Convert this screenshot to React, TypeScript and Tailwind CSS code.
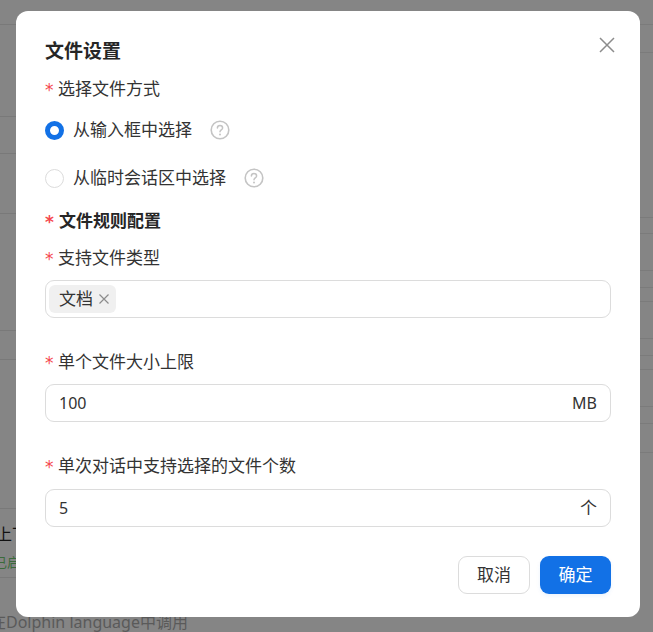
import React from "react";

const fontStack = { fontFamily: '"Noto Sans", "Noto Sans CJK SC", sans-serif' };

const leftRows = [25, 92, 37, 60, 117, 29, 149, 69];
const rightRows = [25, 28, 165, 16, 37, 17, 14, 37, 17, 14, 37, 17, 29];

const Star = ({ bold }: { bold?: boolean }) => (
  <span className={`text-[#f5484e] font-['DejaVu_Sans'] ${bold ? "font-bold" : "font-normal"} w-[13px] shrink-0 text-[17px] leading-none translate-y-[1px]`}>*</span>
);

const Label = ({ text }: { text: string }) => (
  <div className="flex items-center h-[24px] text-[17px] text-[#333333]">
    <Star />
    <span>{text}</span>
  </div>
);

const Help = () => (
  <svg width="20" height="20" viewBox="0 0 20 20" fill="none">
    <circle cx="10" cy="10" r="8.8" stroke="#c4c4c4" strokeWidth="1.6" />
    <path d="M7.4 8c0-1.5 1.1-2.5 2.6-2.5s2.6 1 2.6 2.4c0 2-2.6 2-2.6 3.8" stroke="#c4c4c4" strokeWidth="1.5" strokeLinecap="round" />
    <circle cx="10" cy="14.4" r="1" fill="#c4c4c4" />
  </svg>
);

const Radio = ({ checked, text }: { checked?: boolean; text: string }) => (
  <div className="flex items-center h-[24px] text-[17px] text-[#333333]">
    {checked ? (
      <span className="w-[19px] h-[19px] rounded-full border-[5.5px] border-[#1271e6] bg-white shrink-0" />
    ) : (
      <span className="w-[19px] h-[19px] rounded-full border border-[#dcdcdc] bg-white shrink-0" />
    )}
    <span className="ml-[9px]">{text}</span>
    <span className="ml-[18px] flex"><Help /></span>
  </div>
);

const Field = ({ value, unit }: { value: string; unit: string }) => (
  <div className="flex items-center justify-between h-[38px] rounded-[9px] border border-[#dcdcdc] pl-[13px] pr-[13px] text-[16px] text-[#333333]">
    <span>{value}</span>
    <span className={unit === "个" ? "text-[17px]" : ""}>{unit}</span>
  </div>
);

export default function App() {
  return (
    <div className="relative w-[653px] h-[632px] overflow-hidden bg-[#858585]" style={fontStack}>
      {/* page behind the mask */}
      <div className="flex justify-between h-full">
        <div className="w-[16px] relative">
          {leftRows.map((h, i) => (
            <div key={i} className="border-b border-[#797979]" style={{ height: h }} />
          ))}
          <span className="absolute left-[-4px] top-[522px] text-[16px] text-[#111] whitespace-nowrap">上下</span>
          <span className="absolute left-[-6px] top-[553px] text-[13px] text-[#3b6b3b] whitespace-nowrap">已启</span>
          <span className="absolute left-[-10px] top-[610px] text-[16px] text-[#5a5a5a] whitespace-nowrap">在Dolphin language中调用</span>
        </div>
        <div className="w-[13px]">
          {rightRows.map((h, i) => (
            <div key={i} className="border-b border-[#7b7b7b]" style={{ height: h }} />
          ))}
        </div>
      </div>

      <div className="absolute left-[16px] top-[11px] w-[624px] h-[606px] bg-white rounded-[12px] pl-[29px] pr-[29px] flex flex-col">
        <button className="absolute right-[25px] top-[26px] text-[#8c8c8c]">
          <svg width="16" height="16" viewBox="0 0 16 16" fill="none" className="block">
            <path d="M1 1l14 14M15 1L1 15" stroke="currentColor" strokeWidth="1.5" />
          </svg>
        </button>

        <div className="mt-[27px] h-[26px] flex items-center text-[19px] font-bold text-[#262626]">文件设置</div>
        <div className="mt-[13px]"><Label text="选择文件方式" /></div>
        <div className="mt-[17px]"><Radio checked text="从输入框中选择" /></div>
        <div className="mt-[24px]"><Radio text="从临时会话区中选择" /></div>
        <div className="mt-[19px] flex items-center h-[24px] text-[17px] font-bold text-[#262626]">
          <Star bold />
          <span className="ml-[1px]">文件规则配置</span>
        </div>
        <div className="mt-[13px]"><Label text="支持文件类型" /></div>
        <div className="mt-[10px] flex items-center h-[38px] rounded-[9px] border border-[#dcdcdc] pl-[3px]">
          <span className="flex items-center h-[28px] w-[67px] rounded-[6px] bg-[#f0f0f0] pl-[10px] text-[17px] text-[#333333]">
            文档
            <svg width="10" height="10" viewBox="0 0 10 10" fill="none" className="ml-[6px]">
              <path d="M.5.5l9 9M9.5.5l-9 9" stroke="#8c8c8c" strokeWidth="1.2" />
            </svg>
          </span>
        </div>
        <div className="mt-[32px]"><Label text="单个文件大小上限" /></div>
        <div className="mt-[10px]"><Field value="100" unit="MB" /></div>
        <div className="mt-[32px]"><Label text="单次对话中支持选择的文件个数" /></div>
        <div className="mt-[11px]"><Field value="5" unit="个" /></div>

        <div className="mt-[29px] flex justify-end gap-[10px]">
          <button className="w-[72px] h-[38px] rounded-[9px] border border-[#dcdcdc] bg-white text-[17px] text-[#333333]">取消</button>
          <button className="w-[71px] h-[38px] rounded-[9px] bg-[#1271e6] text-[17px] text-white shadow-[0_2px_4px_rgba(18,113,230,0.08)]">确定</button>
        </div>
      </div>
    </div>
  );
}
